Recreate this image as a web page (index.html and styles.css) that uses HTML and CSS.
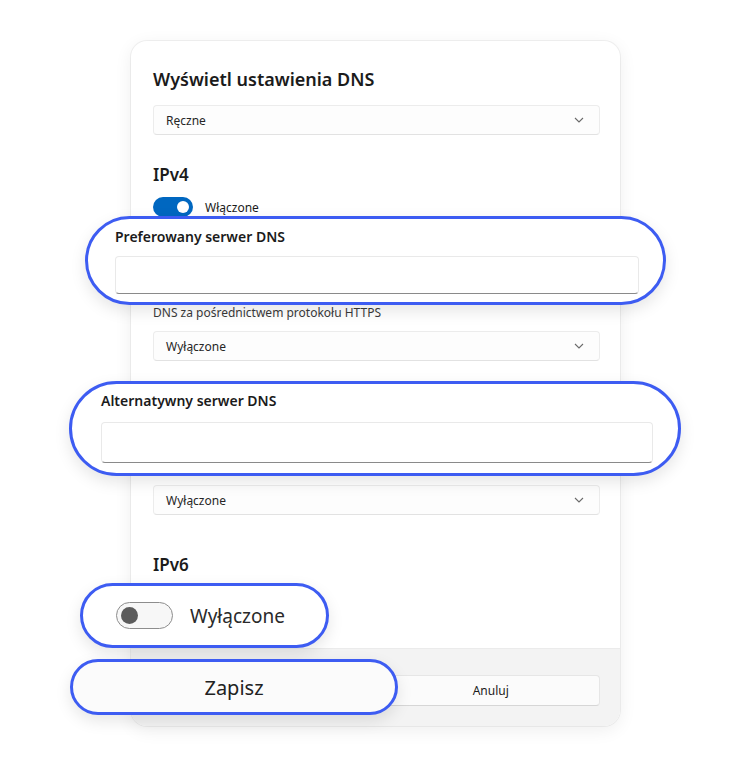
FILE: index.html
```html
<!DOCTYPE html>
<html>
<head>
  <meta charset="UTF-8">
  <title>Ustawienia DNS</title>
  <link rel="stylesheet" href="styles.css">
</head>
<body>
  <div class="stage">

    <div class="card">
      <div class="card-body">
        <h1>Wyświetl ustawienia DNS</h1>
        <div class="select">Ręczne <svg class="chev" width="10" height="6" viewBox="0 0 10 6"><path d="M1 1l4 4 4-4" fill="none" stroke="#6b6b6b" stroke-width="1.1"/></svg></div>

        <h2>IPv4</h2>
        <div class="switch-row"><span class="switch on"><i></i></span> Włączone</div>

        <div class="label covered">Preferowany serwer DNS</div>
        <div class="field"></div>
        <div class="label sub">DNS za pośrednictwem protokołu HTTPS</div>
        <div class="select">Wyłączone <svg class="chev" width="10" height="6" viewBox="0 0 10 6"><path d="M1 1l4 4 4-4" fill="none" stroke="#6b6b6b" stroke-width="1.1"/></svg></div>

        <div class="label gap covered">Alternatywny serwer DNS</div>
        <div class="field"></div>
        <div class="label sub covered">DNS za pośrednictwem protokołu HTTPS</div>
        <div class="select">Wyłączone <svg class="chev" width="10" height="6" viewBox="0 0 10 6"><path d="M1 1l4 4 4-4" fill="none" stroke="#6b6b6b" stroke-width="1.1"/></svg></div>

        <h2 class="v6">IPv6</h2>
        <div class="switch-row covered"><span class="switch off"><i></i></span> Wyłączone</div>
      </div>
      <div class="card-foot">
        <button class="btn covered">Zapisz</button>
        <button class="btn">Anuluj</button>
      </div>
    </div>

    <!-- callouts drawn over the dialog -->
    <div class="callout c1">
      <div class="callout-label">Preferowany serwer DNS</div>
      <div class="callout-field"></div>
    </div>
    <div class="callout c2">
      <div class="callout-label">Alternatywny serwer DNS</div>
      <div class="callout-field"></div>
    </div>
    <div class="callout c3">
      <span class="big-switch"><i></i></span>
      <span>Wyłączone</span>
    </div>
    <div class="callout c4">Zapisz</div>

  </div>
</body>
</html>
```

FILE: styles.css
```css
html, body { margin: 0; background: #fff; }
body { font-family: "Noto Sans", "Open Sans", sans-serif; color: #1b1b1b; }
.stage { position: relative; width: 751px; height: 768px; overflow: hidden; }

.card { position: relative; top: 41px; left: 131px; width: 489px; border-radius: 16px; background: #fff; overflow: hidden;
  box-shadow: 0 0 0 1px rgba(0,0,0,0.05), 0 4px 18px rgba(0,0,0,0.07); }
.card-body { padding: 26px 20px 41px 21px; display: flex; flex-direction: column; }
h1 { margin: 0 0 14px 1px; font-size: 18px; line-height: 24px; font-weight: 600; }
h2 { margin: 29px 0 11px 1px; font-size: 17px; line-height: 22px; font-weight: 600; }
h2.v6 { margin-top: 39px; }

.select { height: 30px; box-sizing: border-box; display: flex; align-items: center; justify-content: space-between;
  padding: 0 15px 0 12px; margin-left: 1px; font-size: 12px; color: #262626; background: #fdfdfd;
  border: 1px solid #ececec; border-bottom-color: #e2e2e2; border-radius: 4px; }

.switch-row { display: flex; align-items: center; gap: 12px; font-size: 12px; margin-left: 1px; height: 20px; }
.switch { width: 40px; height: 20px; box-sizing: border-box; border-radius: 10px; display: flex; align-items: center; padding: 0 4px; }
.switch i { width: 12px; height: 12px; border-radius: 50%; }
.switch.on { background: #0067c0; justify-content: flex-end; }
.switch.on i { background: #fff; }
.switch.off { border: 1px solid #8a8a8a; }
.switch.off i { background: #5c5c5c; }

.label { font-size: 12px; line-height: 16px; margin: 14px 0 8px 1px; }
.label.sub { color: #3a3a3a; margin: 16px 0 10px 1px; }
.label.gap { margin-top: 24px; }
.field { height: 32px; margin-left: 1px; border: 1px solid #ececec; border-bottom-color: #8a8a8a; border-radius: 4px; }
/* parts hidden under the callouts keep their space only */
.covered { visibility: hidden; }

.card-foot { background: #f3f3f3; border-top: 1px solid #ebebeb; padding: 26px 20px 20px 22px; display: flex; gap: 10px; }
.btn { flex: 1; height: 31px; font: inherit; font-size: 12px; color: #1b1b1b; background: #fbfbfb;
  border: 1px solid #e6e6e6; border-bottom-color: #d6d6d6; border-radius: 4px; }

.callout { position: absolute; box-sizing: border-box; border: 3px solid #3d5cf2; background: #fff;
  box-shadow: 0 6px 16px rgba(0,0,0,0.10); display: flex; }
.c1 { left: 85px; top: 216px; width: 581px; height: 89px; border-radius: 45px; flex-direction: column; padding: 8px 24px 0 27px; }
.c2 { left: 69px; top: 381px; width: 612px; height: 95px; border-radius: 48px; flex-direction: column; padding: 7px 25px 0 29px; }
.callout-label { font-size: 14px; line-height: 20px; font-weight: 600; color: #1b1b1b; }
.c1 .callout-label { margin-bottom: 9px; }
.c2 .callout-label { margin-bottom: 11px; }
.callout-field { height: 36px; border: 1px solid #e9e9e9; border-bottom: 1px solid #8a8a8a; border-radius: 4px; background: #fff; }
.c2 .callout-field { height: 39px; }

.c3 { left: 80px; top: 583px; width: 249px; height: 65px; border-radius: 33px; align-items: center; padding-left: 33px; gap: 17px;
  font-size: 19px; color: #2a2a2a; }
.big-switch { width: 57px; height: 27px; box-sizing: border-box; border: 1.5px solid #8d8d8d; border-radius: 14px;
  display: flex; align-items: center; padding-left: 4px; background: #f7f7f7; }
.big-switch i { width: 17px; height: 17px; border-radius: 50%; background: #5c5c5c; }

.c4 { left: 70px; top: 659px; width: 328px; height: 56px; border-radius: 28px; background: #fbfbfb;
  align-items: center; justify-content: center; font-size: 20px; color: #222; }
```
